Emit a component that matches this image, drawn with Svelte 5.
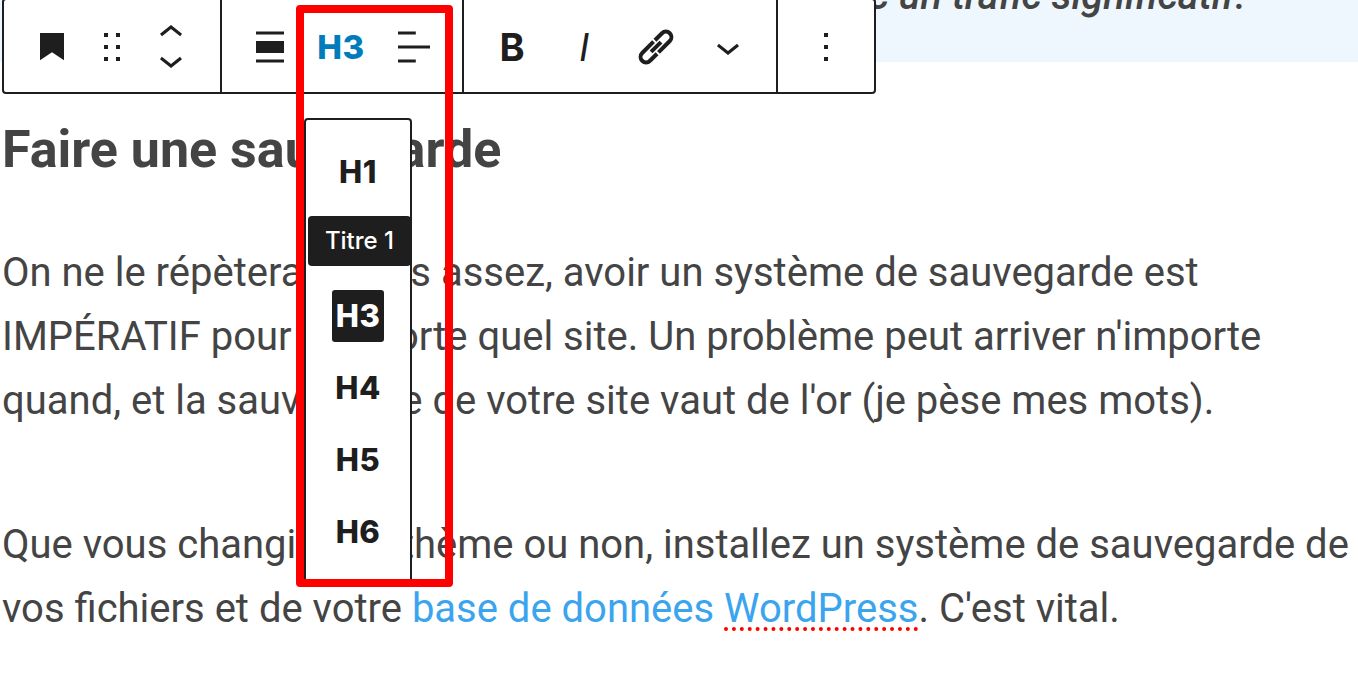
<script>
  const headings = ['H1', 'H2', 'H3', 'H4', 'H5', 'H6'];
</script>

<div class="page">
  <main class="content">
    <div class="callout"><p>Ce n'est pas réservé aux sites avec un trafic significatif.</p></div>
    <h2>Faire une sauvegarde</h2>
    <p class="para">On ne le répètera jamais assez, avoir un système de sauvegarde est IMPÉRATIF pour n'importe quel site. Un problème peut arriver n'importe quand, et la sauvegarde de votre site vaut de l'or (je pèse mes mots).</p>
    <p class="para">Que vous changiez de thème ou non, installez un système de sauvegarde de vos fichiers et de votre <a href="#base">base de données <span class="spell">WordPress</span></a>. C'est vital.</p>
  </main>

  <div class="toolbar">
    <div class="group g1">
      <button class="tool" aria-label="Signet"><svg viewBox="0 0 24 24"><path d="M6 5h12v13.6l-6-4-6 4z"/></svg></button>
      <button class="tool" aria-label="Déplacer"><svg viewBox="0 0 24 24"><path d="M8 7h2V5H8v2zm0 6h2v-2H8v2zm0 6h2v-2H8v2zm6-14v2h2V5h-2zm0 8h2v-2h-2v2zm0 6h2v-2h-2v2z"/></svg></button>
      <div class="mover">
        <svg class="mv-up" viewBox="0 0 24 24"><path d="M6.5 12.4L12 8l5.5 4.4-.9 1.2L12 10l-4.5 3.6-1-1.2z"/></svg>
        <svg class="mv-down" viewBox="0 0 24 24"><path d="M17.5 11.6L12 16l-5.5-4.4.9-1.2L12 14l4.5-3.6 1 1.2z"/></svg>
      </div>
    </div>
    <div class="group g2">
      <button class="tool" aria-label="Pleine largeur"><svg viewBox="0 0 24 24"><path d="M5 4.2h14v1.5H5zM5 9h14v6H5zM5 18.3h14v1.5H5z"/></svg></button>
      <span class="h-current">H3</span>
      <button class="tool" aria-label="Aligner"><svg viewBox="0 0 24 24"><path d="M4 19.8h8.9v-1.5H4v1.5zm8.9-15.6H4v1.5h8.9V4.2zm-8.9 7v1.5h16v-1.5H4z"/></svg></button>
    </div>
    <div class="group g3">
      <span class="fmt bold">B</span>
      <span class="fmt italic">I</span>
      <button class="tool" aria-label="Lien">
        <svg viewBox="0 0 48 48" class="link">
          <g transform="translate(24 24) rotate(-45)">
            <path d="M2 -5.5H-14a5.5 5.5 0 0 0 0 11H-4"/>
            <path d="M-2 5.5H14a5.5 5.5 0 0 0 0 -11H4"/>
            <path d="M-7 0H7"/>
          </g>
        </svg>
      </button>
      <button class="tool more" aria-label="Plus"><svg viewBox="0 0 24 24"><path d="M17.5 11.6L12 16l-5.5-4.4.9-1.2L12 14l4.5-3.6 1 1.2z"/></svg></button>
    </div>
    <div class="group g4">
      <button class="tool" aria-label="Options"><svg viewBox="0 0 24 24"><path d="M13 19h-2v-2h2v2zm0-6h-2v-2h2v2zm0-6h-2V5h2v2z"/></svg></button>
    </div>
  </div>

  <div class="popover">
    {#each headings as h}
      <div class="level">
        <span class:active={h === 'H3'}>{h}</span>
      </div>
    {/each}
    <div class="tooltip">Titre 1</div>
  </div>

  <div class="highlight"></div>
</div>

<style>
  :global(body) {
    margin: 0;
    background: #fff;
  }
  .page {
    position: relative;
    width: 1358px;
    height: 678px;
    overflow: hidden;
    font-family: Roboto, "Liberation Sans", sans-serif;
    color: #444;
  }
  .content {
    display: flex;
    flex-direction: column;
  }
  .callout {
    height: 62px;
    background: #eef6fe;
    overflow: hidden;
    text-align: right;
    padding-right: 112px;
  }
  .callout p {
    margin: -28px 0 0;
    font-size: 40px;
    line-height: 48px;
    font-style: italic;
    font-weight: 500;
    white-space: nowrap;
  }
  h2 {
    margin: 56px 0 0 2px;
    font-size: 52px;
    line-height: 64px;
    font-weight: 700;
  }
  .para {
    margin: 59px 0 0 2px;
    font-size: 40px;
    line-height: 64px;
  }
  .para + .para {
    margin-top: 80px;
  }
  a {
    color: #3ba4ee;
    text-decoration: none;
  }
  .spell {
    text-decoration: underline dotted #f00 3.5px;
    text-underline-offset: 5px;
  }

  .toolbar {
    position: absolute;
    left: 2px;
    top: -2px;
    height: 92px;
    display: flex;
    background: #fff;
    border: 2px solid #1e1e1e;
    border-radius: 4px;
  }
  .group {
    display: flex;
    align-items: center;
    border-right: 2px solid #1e1e1e;
    box-sizing: border-box;
    padding-top: 2px;
    height: 100%;
  }
  .g1 { width: 218px; padding-left: 24px; gap: 12px; }
  .g2 { width: 242px; padding-left: 24px; }
  .g3 { width: 314px; padding-left: 14px; }
  .g4 { flex: none; width: 96px; padding-left: 24px; border-right: 0; }
  .tool {
    appearance: none;
    border: 0;
    padding: 0;
    background: none;
    width: 48px;
    height: 48px;
    display: block;
    flex: none;
  }
  svg {
    display: block;
    width: 48px;
    height: 48px;
    fill: #1e1e1e;
  }
  .mover {
    position: relative;
    width: 48px;
    height: 90px;
    margin-left: -1px;
  }
  .mover svg {
    position: absolute;
    left: 0;
  }
  .mv-up { top: 7px; }
  .mv-down { top: 34px; }
  .h-current {
    width: 72px;
    margin-left: 11px;
    margin-right: 13px;
    text-align: center;
    font: 800 33px/48px Inter, sans-serif;
    letter-spacing: 0.5px;
    color: #007cba;
  }
  .fmt {
    color: #1e1e1e;
    width: 48px;
    flex: none;
    text-align: center;
    font-family: Inter, sans-serif;
    font-size: 38px;
    line-height: 48px;
  }
  .bold { font-weight: 700; margin-left: 10px; margin-right: 24px; }
  .italic { font-style: italic; font-weight: 400; margin-right: 24px; }
  .more { margin-left: 24px; }
  .link path {
    fill: none;
    stroke: #1e1e1e;
    stroke-width: 4;
  }

  .popover {
    position: absolute;
    left: 304px;
    top: 118px;
    width: 108px;
    box-sizing: border-box;
    padding: 16px 0;
    background: #fff;
    border: 2px solid #1e1e1e;
    border-radius: 4px;
  }
  .level {
    height: 72px;
    display: flex;
    align-items: center;
    justify-content: center;
    font: 800 31px/52px Inter, sans-serif;
    letter-spacing: 0.5px;
    color: #1e1e1e;
  }
  .level span {
    width: 52px;
    height: 52px;
    text-align: center;
    border-radius: 3px;
  }
  .level .active {
    background: #1e1e1e;
    color: #fff;
  }
  .tooltip {
    position: absolute;
    left: 2px;
    top: 96px;
    width: 103px;
    height: 50px;
    border-radius: 4px;
    background: #1e1e1e;
    color: #fff;
    font: 500 24px/50px Inter, sans-serif;
    text-align: center;
  }
  .highlight {
    position: absolute;
    left: 296px;
    top: 5px;
    width: 141px;
    height: 566px;
    border: 8px solid #f00;
    border-radius: 4px;
  }
</style>
